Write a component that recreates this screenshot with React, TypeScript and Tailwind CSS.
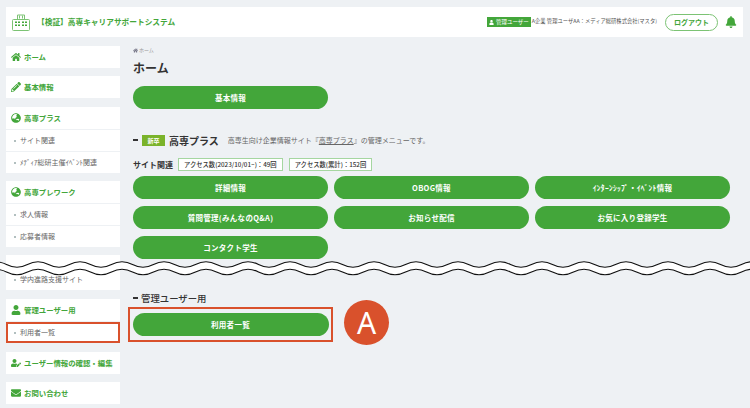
import React from 'react';
import { FaHome, FaPencilAlt, FaUser, FaEnvelope, FaBell, FaUserEdit, FaGlobeAsia } from 'react-icons/fa';

const FONT = '"Noto Sans CJK JP", "Noto Sans", sans-serif';

const SideHead = ({ icon, label }: { icon: React.ReactNode; label: string }) => (
  <div className="h-[22px] flex items-center gap-[3px] pl-[5px] bg-white text-[7.4px] font-bold whitespace-nowrap text-[#43a63a]">
    <span className="w-[10px] flex justify-center text-[10px]">{icon}</span>
    <span>{label}</span>
  </div>
);

const SideItem = ({ label, boxed }: { label: string; boxed?: boolean }) => (
  <div
    className={`h-[21px] flex items-center gap-[4px] pl-[8px] bg-white text-[7px] text-[#666] mt-px ${
      boxed ? 'outline-[2.5px] outline-[#d9512c] -outline-offset-[2px]' : ''
    }`}
  >
    <span className="w-[2px] h-[2px] bg-[#9aa] rounded-full" />
    <span>{label}</span>
  </div>
);

const Pill = ({ label }: { label: string }) => (
  <button className="h-[23px] w-full rounded-full bg-[#43a63a] text-white text-[7.5px] font-bold tracking-[0.3px] flex items-center justify-center">
    {label}
  </button>
);

const AccessBadge = ({ label }: { label: string }) => (
  <span className="h-[13px] px-[5px] flex items-center border border-[#a5d6a0] bg-white text-[6.3px] font-medium text-[#333]">
    {label}
  </span>
);

const BuildingIcon = () => (
  <svg width="18" height="17" viewBox="0 0 18 17" fill="none" stroke="#7cc374" strokeWidth="1">
    <rect x="0.5" y="5.5" width="17" height="11" rx="1" />
    <path d="M5.5 5.5V1h7v4.5" />
    <path d="M7.5 1.5v3M10.5 1.5v3" />
    <g fill="#43a63a" stroke="none">
      <rect x="3" y="7.5" width="2" height="1.5" />
      <rect x="6" y="7.5" width="2" height="1.5" />
      <rect x="10" y="7.5" width="2" height="1.5" />
      <rect x="13" y="7.5" width="2" height="1.5" />
      <rect x="3" y="10.5" width="2" height="1.5" />
      <rect x="6" y="10.5" width="2" height="1.5" />
      <rect x="10" y="10.5" width="2" height="1.5" />
      <rect x="13" y="10.5" width="2" height="1.5" />
    </g>
  </svg>
);

// ページ省略の波線
const WaveCut = () => {
  const wave = (y: number) => {
    let d = `M-56.5 ${y}`;
    for (let x = -56.5; x < 760; x += 42) {
      d += ` C${x + 7} ${y - 3.6} ${x + 14} ${y - 3.6} ${x + 21} ${y} S${x + 35} ${y + 3.6} ${x + 42} ${y}`;
    }
    return d;
  };
  const top = wave(4.5);
  const bottom = wave(12);
  return (
    <svg className="absolute left-0 top-[260px]" width="750" height="18" viewBox="0 0 750 18" fill="none">
      <path d={`${top} L802 9 L-56.5 9 Z`} fill="#fff" />
      <path d={`${bottom} L802 8 L-56.5 8 Z`} fill="#fff" />
      <path d={top} stroke="#111" strokeWidth="1.1" />
      <path d={bottom} stroke="#111" strokeWidth="1.1" />
    </svg>
  );
};

export default function App() {
  return (
    <div className="relative w-[750px] h-[408px] overflow-hidden bg-[#eef1f4] pt-[7px] px-[6px]" style={{ fontFamily: FONT }}>
      <header className="h-[30px] w-[737px] bg-white flex items-center pl-[6px] pr-[6px]">
        <BuildingIcon />
        <span className="ml-[7px] text-[7.7px] font-bold text-[#43a63a]">【検証】高専キャリアサポートシステム</span>
        <div className="ml-auto flex items-center">
          <span className="h-[10px] w-[44px] bg-[#43a63a] text-white text-[5.5px] flex items-center justify-center gap-[2px]">
            <FaUser className="text-[5px]" />
            管理ユーザー
          </span>
          <span className="ml-[1px] text-[5.3px] text-[#555]">A企業 管理ユーザAA：メディア総研株式会社(マスタ)</span>
          <button className="ml-[8px] w-[53px] h-[17px] rounded-full border border-[#7cc374] bg-white text-[7px] font-bold text-[#43a63a]">
            ログアウト
          </button>
          <FaBell className="ml-[7px] text-[12px] text-[#43a63a]" />
        </div>
      </header>

      <div className="flex mt-[9px]">
        <aside className="w-[114px] shrink-0 flex flex-col">
          <SideHead icon={<FaHome />} label="ホーム" />
          <div className="mt-[8px]"><SideHead icon={<FaPencilAlt />} label="基本情報" /></div>
          <div className="mt-[9px]">
            <SideHead icon={<FaGlobeAsia />} label="高専プラス" />
            <SideItem label="サイト関連" />
            <SideItem label="ﾒﾃﾞｨｱ総研主催ｲﾍﾞﾝﾄ関連" />
          </div>
          <div className="mt-[8px]">
            <SideHead icon={<FaGlobeAsia />} label="高専プレワーク" />
            <SideItem label="求人情報" />
            <SideItem label="応募者情報" />
          </div>
          <div className="mt-[8px] bg-white h-[13px]" />
          <SideItem label="学内進路支援サイト" />
          <div className="mt-[9px]">
            <SideHead icon={<FaUser />} label="管理ユーザー用" />
            <SideItem label="利用者一覧" boxed />
          </div>
          <div className="mt-[9px]"><SideHead icon={<FaUserEdit />} label="ユーザー情報の確認・編集" /></div>
          <div className="mt-[8px]"><SideHead icon={<FaEnvelope />} label="お問い合わせ" /></div>
        </aside>

        <main className="ml-[13px] w-[597px]">
          <div className="flex items-center gap-[1px] mt-[1px] h-[6px] text-[5px] text-[#999]">
            <FaHome className="text-[5px] text-[#778]" />
            ホーム
          </div>
          <h1 className="mt-[5px] text-[12px] leading-[20px] font-bold text-[#333]">ホーム</h1>
          <div className="mt-[8px] w-[195px]"><Pill label="基本情報" /></div>

          <div className="mt-[23px] flex items-center h-[16px]">
            <span className="w-[5px] h-[2px] bg-[#333]" />
            <span className="ml-[4px] w-[23px] h-[11px] bg-[#7ab32a] text-white text-[6px] font-bold flex items-center justify-center">新卒</span>
            <span className="ml-[4px] text-[10px] font-bold text-[#333]">高専プラス</span>
            <span className="ml-[9px] text-[7px] text-[#666]">
              高専生向け企業情報サイト『<span className="underline">高専プラス</span>』の管理メニューです。
            </span>
          </div>
          <div className="mt-[10px] flex items-center h-[13px]">
            <span className="text-[8px] font-bold text-[#333]">サイト関連</span>
            <span className="ml-[5px]"><AccessBadge label="アクセス数(2023/10/01~)：49回" /></span>
            <span className="ml-[6px]"><AccessBadge label="アクセス数(累計)：152回" /></span>
          </div>
          <div className="mt-[5px] grid grid-cols-[195px_195px_195px] gap-x-[6px] gap-y-[7px]">
            <Pill label="詳細情報" />
            <Pill label="OBOG情報" />
            <Pill label="ｲﾝﾀｰﾝｼｯﾌﾟ・ｲﾍﾞﾝﾄ情報" />
            <Pill label="質問管理(みんなのQ&A)" />
            <Pill label="お知らせ配信" />
            <Pill label="お気に入り登録学生" />
            <Pill label="コンタクト学生" />
          </div>

          <div className="mt-[32px] flex items-center h-[14px] gap-[3px]">
            <span className="w-[5px] h-[1.5px] bg-[#333]" />
            <span className="text-[9.4px] font-medium text-[#333]">管理ユーザー用</span>
          </div>
          <div className="mt-[2px] flex items-center">
            <div className="-ml-[5px] w-[205px] h-[35px] border-[2.5px] border-[#d9512c] flex items-center px-[2.5px]">
              <Pill label="利用者一覧" />
            </div>
            <div className="ml-[11px] -mt-[9px] -mb-[5px] w-[45px] h-[45px] rounded-full bg-[#d9512c] text-white text-[30px] font-normal leading-none flex items-center justify-center" style={{ fontFamily: '"Noto Sans", sans-serif' }}>
              A
            </div>
          </div>
        </main>
      </div>
      <WaveCut />
    </div>
  );
}
